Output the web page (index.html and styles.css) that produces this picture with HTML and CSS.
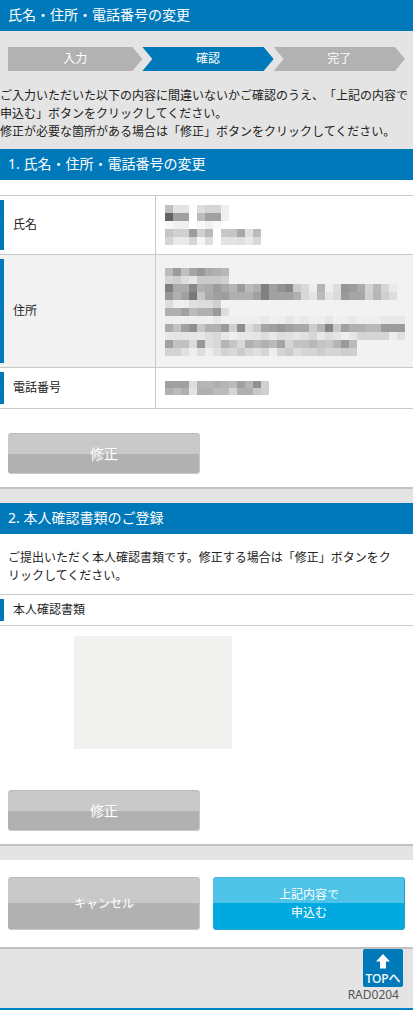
FILE: index.html
```html
<!DOCTYPE html>
<html lang="ja">
<head>
<meta charset="utf-8">
<meta name="viewport" content="width=device-width, initial-scale=1">
<title>氏名・住所・電話番号の変更</title>
<link rel="stylesheet" href="styles.css">
</head>
<body>
<header>
  <h1 class="bar">氏名・住所・電話番号の変更</h1>
</header>
<main>
  <ol class="steps">
    <li class="step step-first">入力</li>
    <li class="step step-current" aria-current="step">確認</li>
    <li class="step">完了</li>
  </ol>
  <p class="lead">ご入力いただいた以下の内容に間違いないかご確認のうえ、「上記の内容で申込む」ボタンをクリックしてください。<br>修正が必要な箇所がある場合は「修正」ボタンをクリックしてください。</p>

  <section class="panel">
    <h2 class="bar">1. 氏名・住所・電話番号の変更</h2>
    <table class="details">
      <tbody>
        <tr><th scope="row">氏名</th><td><svg class="mosaic" data-mosaic="name" role="img" aria-label="氏名"></svg></td></tr>
        <tr class="shaded"><th scope="row">住所</th><td><svg class="mosaic" data-mosaic="address" role="img" aria-label="住所"></svg></td></tr>
        <tr><th scope="row">電話番号</th><td><svg class="mosaic" data-mosaic="phone" role="img" aria-label="電話番号"></svg></td></tr>
      </tbody>
    </table>
    <div class="actions actions-edit">
      <button type="button" class="button">修正</button>
    </div>
  </section>

  <section class="panel">
    <h2 class="bar">2. 本人確認書類のご登録</h2>
    <p class="note">ご提出いただく本人確認書類です。修正する場合は「修正」ボタンをクリックしてください。</p>
    <h3 class="subheading">本人確認書類</h3>
    <div class="document" role="img" aria-label="本人確認書類"></div>
    <div class="actions actions-document">
      <button type="button" class="button">修正</button>
    </div>
  </section>

  <div class="panel actions actions-submit">
    <button type="button" class="button button-tall">キャンセル</button>
    <button type="submit" class="button button-tall button-primary">上記内容で<br>申込む</button>
  </div>
</main>
<footer class="footer">
  <a class="to-top" href="#">
    <svg width="16" height="16" viewBox="0 0 16 16" aria-hidden="true"><path d="M8 0L15 7.5H11V14.5H5V7.5H1Z" fill="#fff"/></svg>
    <span>TOPへ</span>
  </a>
  <p class="page-code">RAD0204</p>
</footer>
<script src="mosaic.js"></script>
</body>
</html>
```

FILE: styles.css
```css
* {
  box-sizing: border-box;
}

body {
  margin: 0;
  background: #e4e4e4;
  color: #222;
  font-family: "Noto Sans", "Noto Sans CJK JP", sans-serif;
  font-size: 12px;
  line-height: 18px;
  text-spacing-trim: space-all;
}

h1, h2, h3, p, ol {
  margin: 0;
  padding: 0;
}

.bar {
  padding: 4px 8px 5px;
  background: #0079ba;
  color: #fff;
  font-size: 14px;
  font-weight: 400;
  line-height: 22px;
}

.steps {
  display: flex;
  margin: 16px 8px;
  list-style: none;
}

.step {
  flex: 1;
  height: 24px;
  background: #b2b2b2;
  color: #fff;
  line-height: 24px;
  text-align: center;
  clip-path: polygon(0 0, calc(100% - 10px) 0, 100% 50%, calc(100% - 10px) 100%, 0 100%, 10px 50%);
}

.step-first {
  flex: 1 0 3px;
  clip-path: polygon(0 0, calc(100% - 10px) 0, 100% 50%, calc(100% - 10px) 100%, 0 100%);
}

.step-current {
  background: #0079ba;
}

.lead {
  margin-bottom: 8px;
}

.panel {
  margin-bottom: 14px;
  border-bottom: 2px solid #c2c2c2;
  background: #fff;
}

.details {
  width: 100%;
  margin-top: 15px;
  border-collapse: collapse;
}

.details tr {
  border-top: 1px solid #c9c9c9;
  border-bottom: 1px solid #c9c9c9;
}

.details th {
  width: 156px;
  padding: 0 13px;
  border-right: 1px solid #c9c9c9;
  background: linear-gradient(#0079ba, #0079ba) no-repeat 0 4px / 4px calc(100% - 8px);
  font-weight: 400;
  text-align: left;
}

.details td {
  padding: 9px 8px 9px 9px;
}

.details tr:last-child td {
  padding: 13px 8px 13px 9px;
}

.details .shaded td {
  padding: 13px 8px 11px 9px;
}

.shaded {
  background: #f2f2f2;
}

.mosaic {
  display: block;
}

.actions {
  display: grid;
  grid-template-columns: 1fr 1fr;
  gap: 13px;
  padding: 0 8px;
}

.actions-edit {
  padding-top: 24px;
  padding-bottom: 13px;
}

.actions-document {
  padding-top: 41px;
  padding-bottom: 13px;
}

.actions-submit {
  margin-bottom: 0;
  padding-top: 17px;
  padding-bottom: 17px;
}

.button {
  min-height: 41px;
  padding: 0;
  border: 0;
  border-radius: 4px;
  background: linear-gradient(#c9c9c9 50%, #b1b1b1 50%);
  box-shadow: inset -1px -1px #c9c9c9, inset 0 1px #bababa;
  color: #fff;
  font-family: inherit;
  font-size: 14px;
  font-weight: 400;
  line-height: 18px;
  text-shadow: 1px 1px #bbb;
}

.button-tall {
  min-height: 53px;
  font-size: 12px;
}

.button-primary {
  background: linear-gradient(#4dc3e8 50%, #00a9e0 50%);
  box-shadow: inset -1px -1px #269fc9, inset 0 1px #43b3d7;
  text-shadow: none;
}

.note {
  padding: 15px 12px 9px 8px;
}

.subheading {
  padding: 6px 13px;
  border-top: 1px solid #c9c9c9;
  border-bottom: 1px solid #c9c9c9;
  background: linear-gradient(#0079ba, #0079ba) no-repeat 0 4px / 4px calc(100% - 8px);
  font-size: 12px;
  font-weight: 400;
}

.document {
  width: 158px;
  height: 113px;
  margin: 10px 0 0 74px;
  background: #f1f1f0;
}

.footer {
  display: flex;
  flex-direction: column;
  align-items: flex-end;
  padding: 0 10px 5px;
  border-bottom: 2px solid #0086c8;
}

.to-top {
  display: flex;
  flex-direction: column;
  align-items: center;
  width: 40px;
  padding-top: 5px;
  border-radius: 2px;
  background: #0079ba;
  color: #fff;
  font-weight: 500;
  line-height: 17px;
  text-decoration: none;
}

.page-code {
  margin-right: 4px;
  color: #555;
  line-height: 16px;
}
```

FILE: mosaic.js
```js
// Each row lists the grey level of its 8px cells as a hex pair; ".." leaves a cell empty.
const mosaics = {
  name: [
    "bf e3 e3 .. dd d5 d5 f0",
    "63 a0 a0 .. bb a0 a0 f0",
    "f8 f0 f0 .. f8 f0 f8",
    "c6 d0 d0 9c d0 b9 .. c8 c5 a8 e0 bb",
    "d5 ea ea d5 f5 dd .. e3 e3 e0 ea d8"
  ],
  address: [
    "bb 9b bf a5 97 ab b0 b8",
    "d5 cf dd e6 ca ca ca d0",
    "80 ab ab 88 b0 ab 9c ab b5 9c bb b0 80 a0 93 88 cc d8 ee b5 ee dd 95 9c ab d3 b8 d5 ea",
    "97 b0 a0 78 c6 a8 a0 9d b0 b0 b0 a0 80 a2 a2 a2 b0 d8 e3 bb e5 db 9a a5 a5 d0 b5 cf dd",
    "dd ee ee e0 dd dd d0",
    "b0 b0 a0 bb b0 b0 9a dd",
    "ee ee ee ee ee f0 e8 f0 ee f0 ee ee e8 f0 ee e6 ee e8 ee ee e6 f0 ee e8 ee ee ee e8 e8 e8",
    "ab c3 a0 90 c8 b0 b0 9a cf 8e dd ca a5 a0 98 a0 a8 a8 cc b5 85 c8 a0 b0 b0 b8 b8 9b 9c 9c",
    "e8 e5 e5 e5 e8 dd d8 e8 f0 e8 e8 e5 dd e8 dd e0 e5 e0 d5 e8 dd e5 ee e5 d5 d5 d5 d5 ee e0",
    "a0 c3 c0 da 97 dd d8 b5 c5 d8 b0 bb b0 bb a5 d5 c3 c3 b8 c3 c8 b5 9a bb",
    "d3 d3 e0 ee dd ee e0 d3 d8 cc d8 e0 d5 ee d5 cc dd d5 d5 cc d5 d5 cc cf"
  ],
  phone: [
    "a0 a0 a0 dd b5 b5 b0 b5 bb a0 b5 90 d0",
    "b0 bb b0 e3 b0 b0 bb bb d5 b0 b0 c8 cf"
  ]
};

const cellHeights = { name: 8, address: 8, phone: 7 };

document.querySelectorAll(".mosaic").forEach((svg) => {
  const key = svg.dataset.mosaic;
  const height = cellHeights[key];
  const rows = mosaics[key].map((row) => row.split(" "));
  const columns = Math.max(...rows.map((row) => row.length));
  svg.setAttribute("width", columns * 8);
  svg.setAttribute("height", rows.length * height);
  rows.forEach((row, y) => row.forEach((level, x) => {
    if (level === "..") return;
    const cell = document.createElementNS("http://www.w3.org/2000/svg", "rect");
    cell.setAttribute("x", x * 8);
    cell.setAttribute("y", y * height);
    cell.setAttribute("width", 8);
    cell.setAttribute("height", height);
    cell.setAttribute("fill", "#" + level.repeat(3));
    svg.append(cell);
  }));
});
```
